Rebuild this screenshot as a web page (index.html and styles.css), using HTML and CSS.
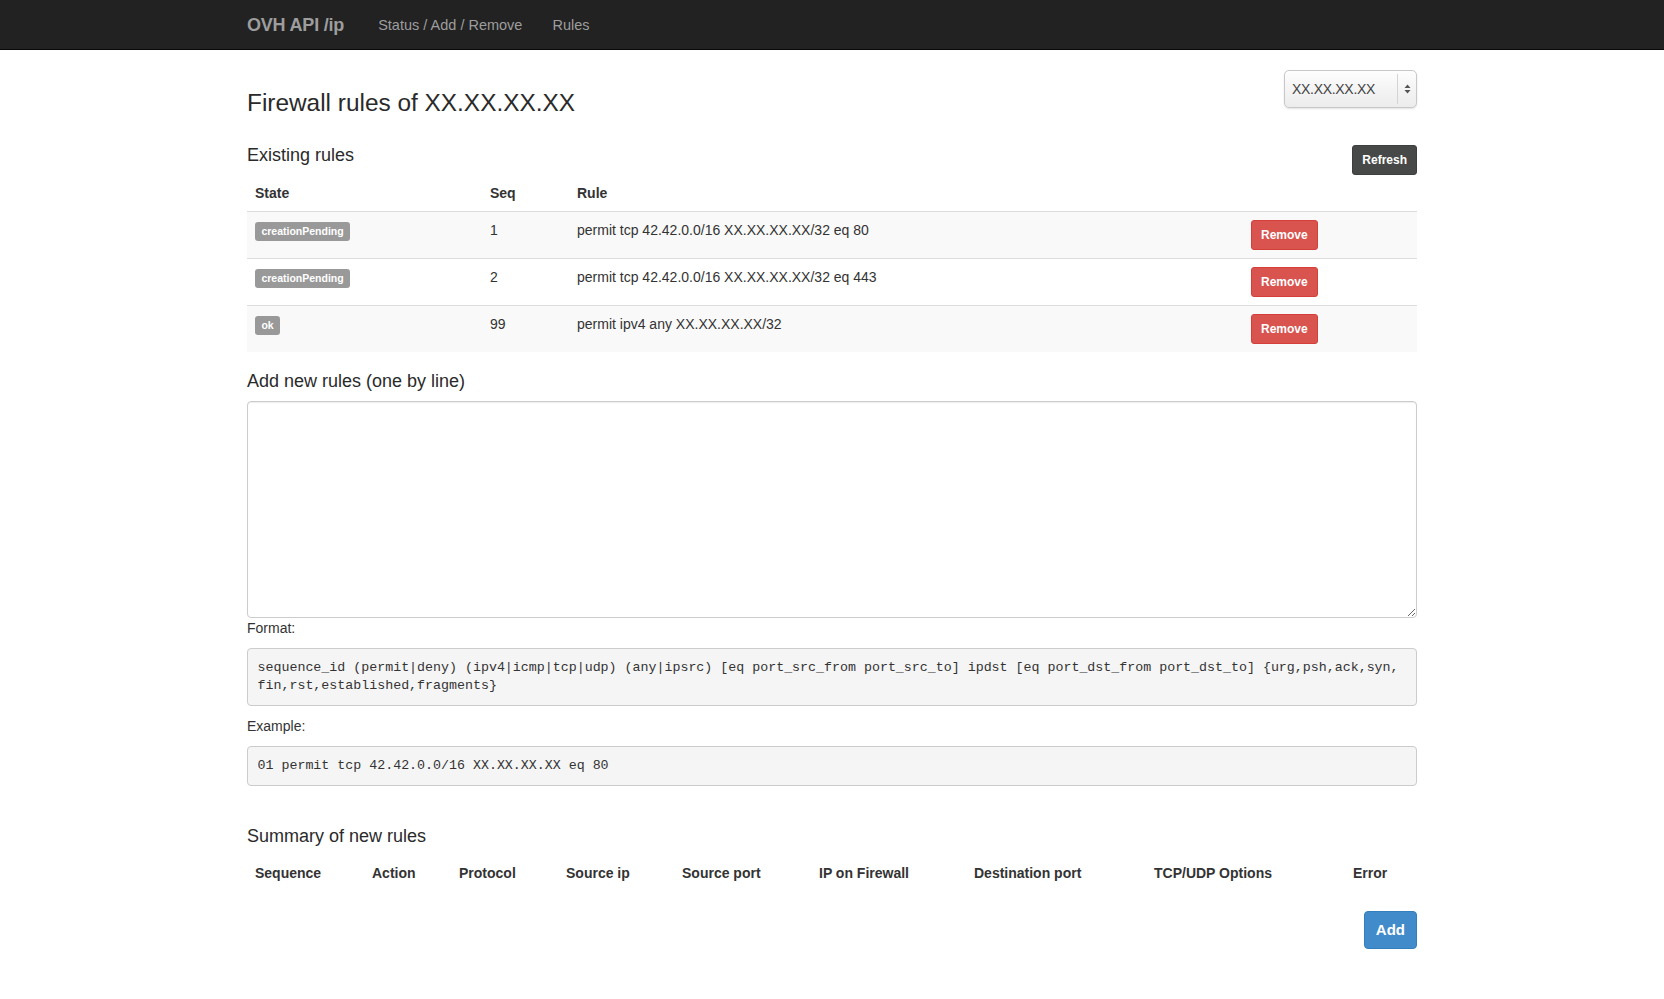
FILE: index.html
```html
<!DOCTYPE html>
<html lang="en">
<head>
<meta charset="utf-8">
<title>OVH API /ip - Rules</title>
<link rel="stylesheet" href="styles.css">
</head>
<body>
<nav class="navbar">
  <div class="container nav-inner">
    <a class="brand" href="#">OVH API /ip</a>
    <a class="nav-link" href="#">Status / Add / Remove</a>
    <a class="nav-link" href="#">Rules</a>
  </div>
</nav>

<main class="container">
  <div class="page-head">
    <h3 class="page-title">Firewall rules of XX.XX.XX.XX</h3>
    <div class="select-wrap">
      <select class="ip-select"><option>XX.XX.XX.XX</option></select>
      <span class="select-arrow">
        <svg width="7" height="10" viewBox="0 0 7 10"><path d="M3.5 0.5 L6.5 4 L0.5 4 Z M3.5 9.5 L6.5 6 L0.5 6 Z" fill="#555"/></svg>
      </span>
    </div>
  </div>

  <div class="section-head">
    <h4 class="section-title">Existing rules</h4>
    <button class="btn btn-sm btn-dark">Refresh</button>
  </div>

  <table class="table table-striped rules-table">
    <colgroup>
      <col class="c-state"><col class="c-seq"><col class="c-rule"><col class="c-action">
    </colgroup>
    <thead>
      <tr><th>State</th><th>Seq</th><th>Rule</th><th></th></tr>
    </thead>
    <tbody>
      <tr>
        <td><span class="label">creationPending</span></td>
        <td>1</td>
        <td>permit tcp 42.42.0.0/16 XX.XX.XX.XX/32 eq 80</td>
        <td><button class="btn btn-sm btn-danger">Remove</button></td>
      </tr>
      <tr>
        <td><span class="label">creationPending</span></td>
        <td>2</td>
        <td>permit tcp 42.42.0.0/16 XX.XX.XX.XX/32 eq 443</td>
        <td><button class="btn btn-sm btn-danger">Remove</button></td>
      </tr>
      <tr>
        <td><span class="label">ok</span></td>
        <td>99</td>
        <td>permit ipv4 any XX.XX.XX.XX/32</td>
        <td><button class="btn btn-sm btn-danger">Remove</button></td>
      </tr>
    </tbody>
  </table>

  <h4 class="section-title add-title">Add new rules (one by line)</h4>
  <textarea class="rules-input"></textarea>
  <div class="help-label">Format:</div>
  <pre class="code">sequence_id (permit|deny) (ipv4|icmp|tcp|udp) (any|ipsrc) [eq port_src_from port_src_to] ipdst [eq port_dst_from port_dst_to] {urg,psh,ack,syn,
fin,rst,established,fragments}</pre>
  <div class="help-label">Example:</div>
  <pre class="code">01 permit tcp 42.42.0.0/16 XX.XX.XX.XX eq 80</pre>

  <h4 class="section-title summary-title">Summary of new rules</h4>
  <table class="table summary-table">
    <colgroup>
      <col class="s1"><col class="s2"><col class="s3"><col class="s4"><col class="s5"><col class="s6"><col class="s7"><col class="s8"><col class="s9">
    </colgroup>
    <thead>
      <tr>
        <th>Sequence</th><th>Action</th><th>Protocol</th><th>Source ip</th><th>Source port</th><th>IP on Firewall</th><th>Destination port</th><th>TCP/UDP Options</th><th>Error</th>
      </tr>
    </thead>
    <tbody></tbody>
  </table>
  <div class="actions">
    <button class="btn btn-primary btn-add">Add</button>
  </div>
</main>
</body>
</html>
```

FILE: styles.css
```css
* { box-sizing: border-box; }

html, body {
  margin: 0;
  padding: 0;
}

body {
  font-family: "Liberation Sans", Arial, Helvetica, sans-serif;
  font-size: 14px;
  line-height: 20px;
  color: #333;
  background: #fff;
}

.container {
  width: 1170px;
  margin: 0 auto;
}

/* Navbar */
.navbar {
  background: #222;
  height: 50px;
  border-bottom: 1px solid #080808;
}

.nav-inner {
  display: flex;
  align-items: center;
  height: 49px;
}

.brand {
  color: #9d9d9d;
  font-size: 18px;
  font-weight: bold;
  text-decoration: none;
  line-height: 20px;
  margin-right: 19px;
  letter-spacing: -0.2px;
  padding-top: 1px;
}

.nav-link {
  color: #9d9d9d;
  text-decoration: none;
  font-size: 14.5px;
  padding: 1px 15px 0;
}

/* Page head */
.page-head {
  display: flex;
  justify-content: space-between;
  align-items: flex-start;
  padding-top: 20px;
  height: 66px;
}

.page-title {
  margin: 20px 0 0;
  font-size: 24.4px;
  font-weight: normal;
  line-height: 26px;
  color: #2a2a2a;
}

.select-wrap {
  position: relative;
  width: 133px;
  height: 38px;
}

.ip-select {
  -webkit-appearance: none;
  appearance: none;
  width: 133px;
  height: 38px;
  border: 1px solid #c8c8c8;
  border-radius: 5px;
  background: linear-gradient(#fdfdfd, #ececec);
  box-shadow: 0 1px 2px rgba(0,0,0,0.12);
  font-family: "Liberation Sans", Arial, sans-serif;
  font-size: 14px;
  color: #444;
  padding: 0 24px 0 7px;
  letter-spacing: -0.3px;
}

.select-arrow {
  position: absolute;
  right: 1px;
  top: 4px;
  bottom: 4px;
  width: 19px;
  border-left: 1px solid #d4d4d4;
  display: flex;
  align-items: center;
  justify-content: center;
  pointer-events: none;
}

/* Section headings */
.section-head {
  display: flex;
  justify-content: space-between;
  align-items: flex-start;
  margin-top: 29px;
  height: 30px;
}

.section-title {
  margin: 0;
  font-size: 18px;
  font-weight: normal;
  line-height: 20px;
  color: #2a2a2a;
}

.add-title {
  margin: 19px 0 10px;
}

.summary-title {
  margin: 40px 0 9px;
}

/* Buttons */
.btn {
  font-family: "Liberation Sans", Arial, sans-serif;
  font-weight: bold;
  color: #fff;
  border: 1px solid transparent;
  border-radius: 4px;
  cursor: pointer;
}

.btn-sm {
  font-size: 12px;
  line-height: 18px;
  padding: 5px 9px;
  border-radius: 3px;
}

.btn-dark {
  background: #474949;
  border-color: #3d3f3f;
}

.btn-danger {
  background: #d9534f;
  border-color: #d43f3a;
}

.btn-primary {
  background: #428bca;
  border-color: #357ebd;
}

.btn-add {
  font-size: 15px;
  line-height: 20px;
  padding: 8px 11px;
}

/* Tables */
.table {
  width: 100%;
  border-collapse: collapse;
  table-layout: fixed;
}

.table th {
  text-align: left;
  font-weight: bold;
  padding: 8px;
  line-height: 20px;
  vertical-align: bottom;
}

.table td {
  padding: 8px;
  line-height: 20px;
  vertical-align: top;
  border-top: 1px solid #ddd;
}

.table-striped tbody tr:nth-child(odd) {
  background: #f9f9f9;
}

.c-state { width: 235px; }
.c-seq { width: 87px; }
.c-rule { width: 674px; }
.c-action { width: 174px; }

.label {
  display: inline-block;
  margin-top: 2px;
  background: #999;
  color: #fff;
  font-size: 10.5px;
  font-weight: bold;
  line-height: 10px;
  padding: 4px 6.4px 5px;
  border-radius: 3px;
  vertical-align: top;
}

.summary-table {
  margin-bottom: 20px;
}

.s1 { width: 117px; }
.s2 { width: 87px; }
.s3 { width: 107px; }
.s4 { width: 116px; }
.s5 { width: 137px; }
.s6 { width: 155px; }
.s7 { width: 180px; }
.s8 { width: 199px; }
.s9 { width: 72px; }

/* Form */
.rules-input {
  display: block;
  width: 100%;
  height: 217px;
  border: 1px solid #ccc;
  border-radius: 4px;
  box-shadow: inset 0 1px 1px rgba(0,0,0,0.075);
  resize: vertical;
  font-family: "Liberation Sans", Arial, sans-serif;
  font-size: 14px;
  padding: 6px 12px;
  margin: 0;
}

.help-label {
  font-size: 14px;
  line-height: 20px;
  margin-bottom: 10px;
}

.code {
  margin: 0 0 10px;
  padding: 9.5px;
  background: #f5f5f5;
  border: 1px solid #ccc;
  border-radius: 4px;
  font-family: "Liberation Mono", "DejaVu Sans Mono", monospace;
  font-size: 13.3px;
  line-height: 18.5px;
  color: #333;
  white-space: pre-wrap;
}

.actions {
  display: flex;
  justify-content: flex-end;
}
```
